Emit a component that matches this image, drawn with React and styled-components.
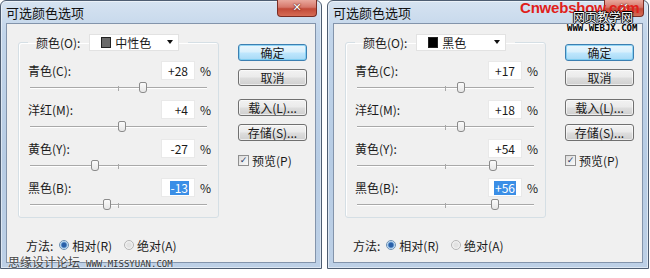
import React from 'react';
import styled, { createGlobalStyle } from 'styled-components';

const GlobalStyle = createGlobalStyle`
  html, body { margin: 0; padding: 0; background: #fff; }
  body { font-family: "Noto Sans CJK SC", "Noto Sans", sans-serif; color: #1a1a1a; }
`;

const dialogs = [
  {
    swatch: '#6a6a6a',
    colorName: '中性色',
    values: [28, 4, -27, -13],
  },
  {
    swatch: '#000',
    colorName: '黑色',
    values: [17, 18, 54, 56],
  },
];

const params = ['青色(C):', '洋红(M):', '黄色(Y):', '黑色(B):'];

const fmt = (v) => (v > 0 ? `+${v}` : `${v}`);

function Dialog({ swatch, colorName, values }) {
  return (
    <Window>
      <TitleBar>
        <Title>可选颜色选项</Title>
        <CloseButton>✕</CloseButton>
      </TitleBar>
      <Client>
        <LeftColumn>
          <Group>
            <Legend>
              <span>颜色(O):</span>
              <Select>
                <Swatch color={swatch} />
                <SelectText>{colorName}</SelectText>
                <Arrow />
              </Select>
            </Legend>
            <ParamList>
              {params.map((label, i) => (
                <Param key={label}>
                  <ParamLine>
                    <ParamLabel>{label}</ParamLabel>
                    <ValueBox>
                      <ValueText selected={i === 3}>{fmt(values[i])}</ValueText>
                    </ValueBox>
                    <Percent>%</Percent>
                  </ParamLine>
                  <Slider>
                    <Track />
                    <Tick />
                    <Thumb style={{ left: 2 + ((values[i] + 100) / 200) * 177 - 4 }} />
                  </Slider>
                </Param>
              ))}
            </ParamList>
          </Group>
          <MethodRow>
            <span>方法:</span>
            <RadioOption>
              <Radio checked />
              相对(R)
            </RadioOption>
            <RadioOption>
              <Radio />
              绝对(A)
            </RadioOption>
          </MethodRow>
        </LeftColumn>
        <ButtonColumn>
          <Button primary>确定</Button>
          <Button>取消</Button>
          <Button gap={13}>载入(L)...</Button>
          <Button>存储(S)...</Button>
          <CheckRow>
            <CheckBox>✓</CheckBox>
            预览(P)
          </CheckRow>
        </ButtonColumn>
      </Client>
    </Window>
  );
}

export default function App() {
  return (
    <Page>
      <GlobalStyle />
      {dialogs.map((d) => (
        <Dialog key={d.colorName} {...d} />
      ))}
      <MissyuanMark>
        思缘设计论坛<MissyuanUrl>WWW.MISSYUAN.COM</MissyuanUrl>
      </MissyuanMark>
      <CnwebMark>Cnwebshow.com</CnwebMark>
      <WebjxMark>网页教学网</WebjxMark>
      <WebjxUrl>WWW.WEBJX.COM</WebjxUrl>
    </Page>
  );
}

const Page = styled.div`
  position: relative;
  width: 650px;
  height: 278px;
  display: flex;
  gap: 5px;
  background: #fff;
  overflow: hidden;
`;

const Window = styled.div`
  width: 322px;
  height: 269px;
  box-sizing: border-box;
  display: flex;
  flex-direction: column;
  padding: 0 5px 5px;
  border: 1px solid #4e5d71;
  border-radius: 6px 6px 0 0;
  background: linear-gradient(180deg, #d6e3f1 0%, #c2d5ea 12%, #b7cce4 60%, #bdd0e6 100%);
  box-shadow: inset 0 0 0 1px rgba(255, 255, 255, 0.5);
`;

const TitleBar = styled.div`
  height: 22px;
  display: flex;
  justify-content: space-between;
  align-items: flex-start;
`;

const Title = styled.div`
  font-size: 13px;
  line-height: 23px;
  color: #111;
`;

const CloseButton = styled.div`
  width: 40px;
  height: 17px;
  margin: -1px -1px 0 0;
  box-sizing: border-box;
  border: 1px solid #7a2d24;
  border-top: none;
  border-radius: 0 0 4px 4px;
  background: linear-gradient(180deg, #e9a89d 0%, #d6776a 45%, #c24a38 55%, #d66c55 100%);
  color: #fff;
  font-family: "DejaVu Sans", sans-serif;
  font-weight: bold;
  font-size: 11px;
  line-height: 16px;
  text-align: center;
  text-shadow: 0 0 2px #5a1a12, 0 0 1px #5a1a12;
`;

const Client = styled.div`
  height: 240px;
  box-sizing: border-box;
  background: #f0f0f0;
  border: 1px solid #8394ab;
  display: grid;
  grid-template-columns: 201px 69px;
  column-gap: 19px;
  align-items: start;
  padding: 9px 0 0 11px;
  font-size: 12px;
`;

const LeftColumn = styled.div`
  display: flex;
  flex-direction: column;
`;

const Group = styled.fieldset`
  margin: 0;
  padding: 0 10px 0 9px;
  border: 1px solid #d5dfe5;
  border-radius: 3px;
  box-shadow: inset 1px 1px 0 #fff;
  min-width: 0;
`;

const Legend = styled.legend`
  display: flex;
  align-items: center;
  gap: 9px;
  height: 18px;
  padding: 0 9px 0 8px;
  font-size: 12px;
`;

const Select = styled.div`
  width: 90px;
  height: 17px;
  box-sizing: border-box;
  background: #fff;
  border: 1px solid #e2e2e2;
  display: flex;
  align-items: center;
  padding: 0 5px 0 11px;
  gap: 4px;
`;

const Swatch = styled.div`
  width: 10px;
  height: 11px;
  box-sizing: border-box;
  border: 1px solid #222;
  background: ${(p) => p.color};
`;

const SelectText = styled.span`
  flex: 1;
  line-height: 15px;
`;

const Arrow = styled.div`
  width: 0;
  height: 0;
  border-left: 3px solid transparent;
  border-right: 3px solid transparent;
  border-top: 4px solid #111;
`;

const ParamList = styled.div`
  padding-top: 10px;
`;

const Param = styled.div`
  height: 39px;
`;

const ParamLine = styled.div`
  height: 19px;
  display: flex;
  align-items: center;
`;

const ParamLabel = styled.span`
  flex: 1;
`;

const ValueBox = styled.div`
  width: 34px;
  height: 19px;
  box-sizing: border-box;
  background: #fff;
  border: 1px solid #e9e9e9;
  display: flex;
  align-items: center;
  justify-content: flex-end;
  padding-right: 5px;
`;

const ValueText = styled.span`
  line-height: 14px;
  padding: 0 1px;
  background: ${(p) => (p.selected ? '#3a8ee6' : 'transparent')};
  color: ${(p) => (p.selected ? '#fff' : '#1a1a1a')};
`;

const Percent = styled.span`
  margin-left: 5px;
  width: 8px;
`;

const Slider = styled.div`
  position: relative;
  height: 20px;
`;

const Track = styled.div`
  position: absolute;
  left: 2px;
  top: 7px;
  width: 177px;
  height: 0;
  border-top: 1px solid #a9a9a9;
  border-bottom: 1px solid #fff;
`;

const Tick = styled.div`
  position: absolute;
  left: 90px;
  top: 6px;
  width: 1px;
  height: 5px;
  background: #a8a8a8;
`;

const Thumb = styled.div`
  position: absolute;
  top: 2px;
  width: 8px;
  height: 11px;
  box-sizing: border-box;
  border: 1px solid #8b8b8b;
  border-radius: 2px 2px 3px 3px;
  background: linear-gradient(180deg, #fbfbfb 0%, #e6e6e6 100%);
`;

const MethodRow = styled.div`
  display: flex;
  align-items: center;
  height: 16px;
  margin-top: 19px;
  padding-left: 8px;
  gap: 6px;
`;

const RadioOption = styled.label`
  display: flex;
  align-items: center;
  gap: 3px;
  margin-right: 6px;
`;

const Radio = styled.span`
  width: 10px;
  height: 10px;
  box-sizing: border-box;
  border-radius: 50%;
  border: 1px solid ${(p) => (p.checked ? '#6b8fb3' : '#b5b5b5')};
  background: ${(p) =>
    p.checked
      ? 'radial-gradient(circle, #2a5fa8 0 2px, #7fb0de 3px, #e9f2fb 4px)'
      : 'radial-gradient(circle, #e2e2e2 0 2px, #f5f5f5 4px)'};
`;

const ButtonColumn = styled.div`
  display: flex;
  flex-direction: column;
  padding-top: 11px;
`;

const Button = styled.div`
  height: 17px;
  box-sizing: border-box;
  margin-bottom: 8px;
  margin-top: ${(p) => (p.gap ? p.gap - 8 : 0)}px;
  border: 1px solid ${(p) => (p.primary ? '#3c7fb1' : '#707070')};
  border-radius: 3px;
  background: ${(p) =>
    p.primary
      ? 'linear-gradient(180deg, #eaf6fd 0%, #d9f0fc 45%, #bee6fd 55%, #a7d9f5 100%)'
      : 'linear-gradient(180deg, #f2f2f2 0%, #ebebeb 45%, #dddddd 55%, #cfcfcf 100%)'};
  box-shadow: inset 0 0 0 1px ${(p) => (p.primary ? 'rgba(110, 200, 240, 0.7)' : 'rgba(255, 255, 255, 0.6)')};
  text-align: center;
  line-height: 15px;
  font-size: 12px;
`;

const CheckRow = styled.div`
  display: flex;
  align-items: center;
  gap: 3px;
  margin-top: 4px;
  height: 14px;
`;

const CheckBox = styled.span`
  width: 11px;
  height: 11px;
  box-sizing: border-box;
  border: 1px solid #8f8f8f;
  background: linear-gradient(135deg, #dcdcdc, #fafafa);
  color: #2a3f6b;
  font-size: 9px;
  line-height: 9px;
  text-align: center;
  font-family: "DejaVu Sans", sans-serif;
  font-weight: bold;
`;

const MissyuanMark = styled.div`
  position: absolute;
  left: 8px;
  top: 254px;
  font-size: 12px;
  line-height: 16px;
  color: #444;
  display: flex;
  align-items: baseline;
  text-shadow: 0 0 2px #fff;
`;

const MissyuanUrl = styled.span`
  font-family: "DejaVu Sans Mono", monospace;
  font-size: 9px;
  margin-left: 6px;
  color: #333;
`;

const CnwebMark = styled.div`
  position: absolute;
  left: 520px;
  top: -1px;
  font-family: "Liberation Sans", Arial, sans-serif;
  font-weight: bold;
  font-size: 15px;
  letter-spacing: -0.2px;
  color: #e0201a;
`;

const WebjxMark = styled.div`
  position: absolute;
  left: 573px;
  top: 9px;
  font-size: 12px;
  line-height: 16px;
  color: #fff;
  text-shadow: 1px 0 #000, -1px 0 #000, 0 1px #000, 0 -1px #000;
`;

const WebjxUrl = styled.div`
  position: absolute;
  left: 567px;
  top: 23px;
  font-family: "DejaVu Sans Mono", monospace;
  font-weight: bold;
  font-size: 9px;
  line-height: 11px;
  color: #000;
  text-shadow: 0 0 2px #fff;
`;
